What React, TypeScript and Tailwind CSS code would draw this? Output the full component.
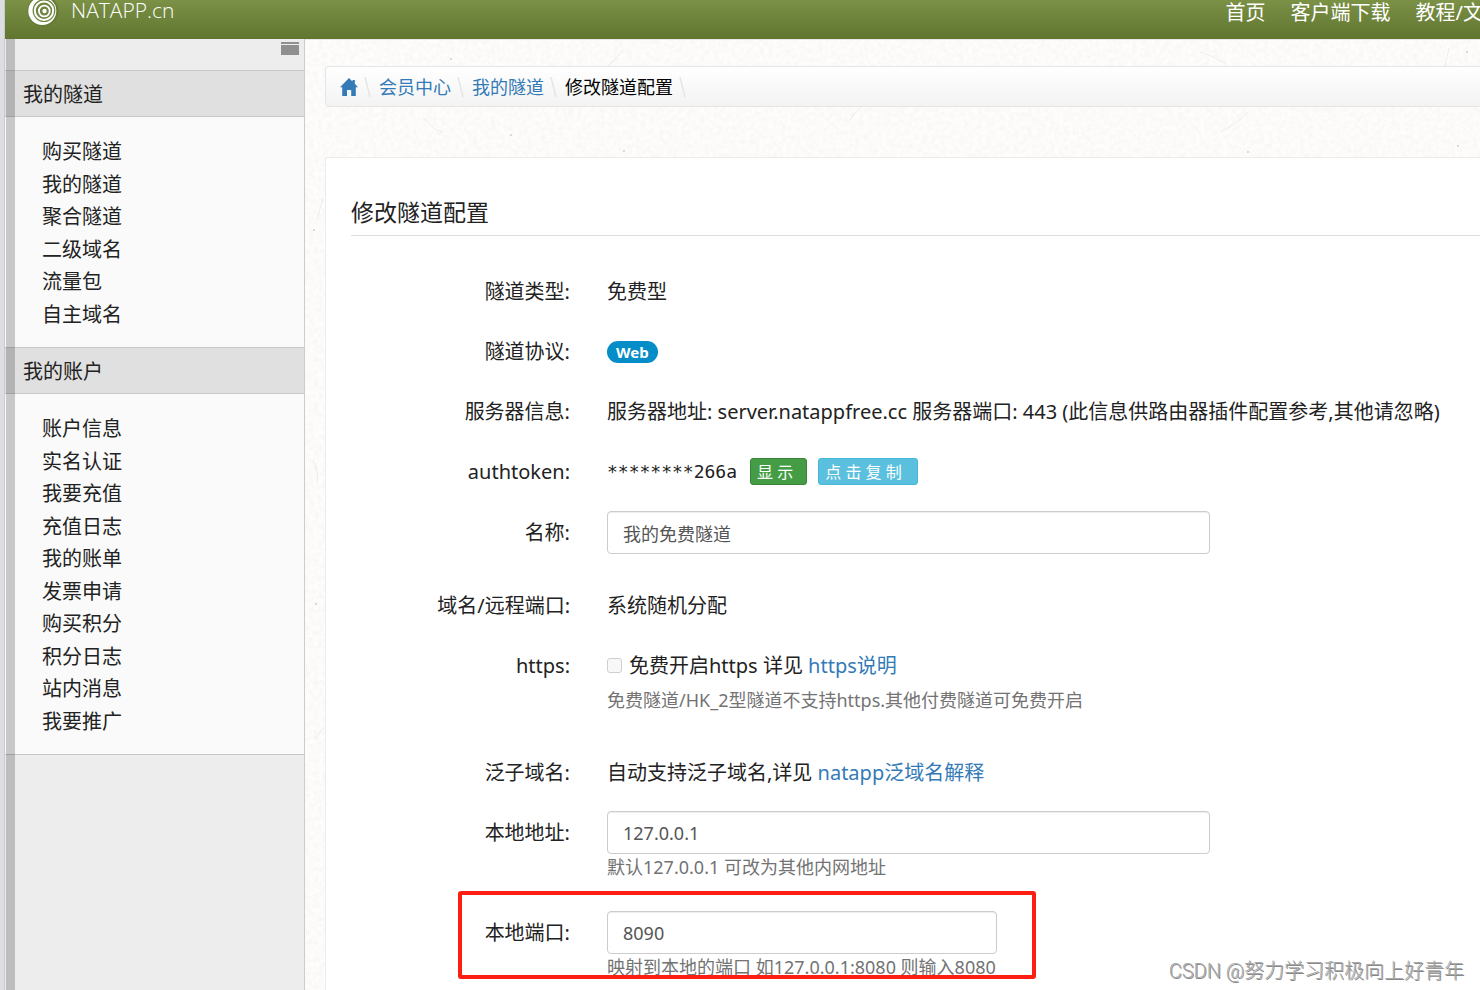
import { useState } from 'react';
import type { ReactNode } from 'react';

const navItems = ['首页', '客户端下载', '教程/文档'];

const menuGroups = [
  {
    title: '我的隧道',
    items: ['购买隧道', '我的隧道', '聚合隧道', '二级域名', '流量包', '自主域名'],
  },
  {
    title: '我的账户',
    items: [
      '账户信息',
      '实名认证',
      '我要充值',
      '充值日志',
      '我的账单',
      '发票申请',
      '购买积分',
      '积分日志',
      '站内消息',
      '我要推广',
    ],
  },
];

const inputClass =
  'h-[43px] w-full rounded border border-[#ccc] bg-white px-[15px] text-lg text-[#555] shadow-[inset_0_1px_1px_rgba(0,0,0,0.075)] outline-none focus:border-[#66afe9]';

function Logo() {
  return (
    <svg className="-mt-1 h-8 w-8 shrink-0" viewBox="0 0 32 32" fill="none">
      <circle cx="16" cy="15" r="15.5" fill="#667a35" />
      <circle cx="15.3" cy="15" r="14" fill="#fff" />
      <circle cx="17" cy="14.6" r="11.4" fill="#6f8540" />
      <circle cx="17" cy="14.8" r="9.2" stroke="#fff" strokeWidth="2" />
      <circle cx="17.3" cy="15" r="5.4" stroke="#fff" strokeWidth="1.8" />
      <circle cx="17.5" cy="15" r="2.2" fill="#fff" />
    </svg>
  );
}

function HomeIcon() {
  return (
    <svg className="h-[18px] w-[18px]" viewBox="0 0 18 18" fill="#337ab7">
      <path d="M9 0 12.5 3.5V2h2.3v3.8L18 9.2h-2.2V18h-4.6v-6H7v6H2.2V9.2H0L9 0Z" />
    </svg>
  );
}

function Slash() {
  return (
    <svg className="h-5 w-[7px] shrink-0" viewBox="0 0 7 20" stroke="#e6e6e6" strokeWidth="1.6">
      <path d="M1 0 6 20" />
    </svg>
  );
}

// Faint paper grain behind the content area
function PaperTexture() {
  return (
    <svg className="pointer-events-none absolute inset-0 h-full w-full" aria-hidden="true">
      <filter id="grain">
        <feTurbulence type="fractalNoise" baseFrequency="0.22" numOctaves="3" seed="4" />
        <feColorMatrix values="0 0 0 0 0.55  0 0 0 0 0.54  0 0 0 0 0.5  0.3 0 0 0 -0.1" />
      </filter>
      <rect width="100%" height="100%" filter="url(#grain)" opacity="0.7" />
      <g fill="none" stroke="#8a857a" strokeOpacity="0.12">
        <path d="M300 28q12-8 18-18M595 68q14-10 20-22M895 12q14 4 26 12M1144 8l-4 18M545 80q8-14 22-18M915 92q14-6 28-20M120 78q6 12 18 14M12 180l6-22M8 420q6 12 4 24M10 700l8-12" />
      </g>
      <g fill="#777" fillOpacity="0.35">
        <circle cx="146" cy="19" r="1" />
        <circle cx="319" cy="111" r="1" />
        <circle cx="206" cy="95" r="1" />
        <circle cx="943" cy="112" r="1" />
        <circle cx="1162" cy="12" r="1" />
        <circle cx="1153" cy="106" r="1" />
        <circle cx="9" cy="190" r="1" />
        <circle cx="11" cy="564" r="1" />
      </g>
    </svg>
  );
}

function TopBar() {
  return (
    <header className="flex h-[39px] items-start bg-linear-to-b from-[#7b9146] to-[#61752f] pl-[22px] text-white">
      <a href="#" className="flex items-start gap-3">
        <Logo />
        <span className="font-['Open_Sans','Noto_Sans',sans-serif] text-[21px] leading-5 font-light">NATAPP.cn</span>
      </a>
      <nav className="mt-px -mr-[23px] ml-auto flex shrink-0 gap-[25px]">
        {navItems.map((item) => (
          <a key={item} href="#" className="text-xl leading-6 whitespace-nowrap">
            {item}
          </a>
        ))}
      </nav>
    </header>
  );
}

function Sidebar() {
  return (
    <aside className="relative w-[300px] shrink-0 border-r border-[#ccc] bg-[#ededed]">
      <div className="flex h-[31px] justify-end pt-[3px] pr-[5px]">
        <button type="button" aria-label="收起菜单" className="flex h-[13px] w-[18px] flex-col gap-px">
          <span className="h-0.5 w-full bg-[#8f8f8f]" />
          <span className="h-2.5 w-full bg-[#8f8f8f]" />
        </button>
      </div>
      {menuGroups.map((group) => (
        <section key={group.title}>
          <h2 className="h-[47px] border-y border-[#c8c8c8] bg-[#e0e0e0] pl-[18px] text-xl leading-[47px]">
            {group.title}
          </h2>
          <ul className="bg-[#fafafa] pt-[19px] pb-4 pl-[37px] text-xl leading-relaxed">
            {group.items.map((item) => (
              <li key={item}>
                <a href="#">{item}</a>
              </li>
            ))}
          </ul>
        </section>
      ))}
      <div className="h-px bg-[#c8c8c8]" />
      <div className="absolute inset-y-0 left-px w-[9px] bg-black/20" />
    </aside>
  );
}

function Breadcrumb() {
  return (
    <nav className="flex h-[41px] shrink-0 items-center gap-1.5 rounded-l border border-r-0 border-[#e5e5e5] bg-linear-to-b from-white to-[#f3f3f3] pl-3.5 text-lg">
      <a href="#" aria-label="首页">
        <HomeIcon />
      </a>
      <Slash />
      <a href="#" className="ml-0.5 text-[#337ab7]">会员中心</a>
      <Slash />
      <a href="#" className="ml-0.5 text-[#337ab7]">我的隧道</a>
      <Slash />
      <span className="ml-0.5 text-black">修改隧道配置</span>
      <Slash />
    </nav>
  );
}

interface RowProps {
  label: string;
  htmlFor?: string;
  hint?: string;
  className?: string;
  children: ReactNode;
}

function Row({ label, htmlFor, hint, className = 'mb-[17px]', children }: RowProps) {
  const labelClass = 'w-[219px] shrink-0 text-right leading-[43px]';

  return (
    <div className={`flex gap-[37px] ${className}`}>
      {htmlFor ? (
        <label htmlFor={htmlFor} className={labelClass}>{label}</label>
      ) : (
        <span className={labelClass}>{label}</span>
      )}
      <div className="min-w-0 flex-1">
        <div className="flex h-[43px] items-center whitespace-nowrap">{children}</div>
        {hint && <p className="text-lg leading-[26px] whitespace-nowrap text-[#737373]">{hint}</p>}
      </div>
    </div>
  );
}

function TunnelForm() {
  const [name, setName] = useState('我的免费隧道');
  const [address, setAddress] = useState('127.0.0.1');
  const [port, setPort] = useState('8090');

  return (
    <form className="mt-[34px] text-xl">
      <Row label="隧道类型:">免费型</Row>
      <Row label="隧道协议:">
        <span className="h-[22px] rounded-full bg-[#058dc7] px-[9px] text-[15px] leading-[22px] font-bold text-white">
          Web
        </span>
      </Row>
      <Row label="服务器信息:">
        服务器地址: server.natappfree.cc 服务器端口: 443 (此信息供路由器插件配置参考,其他请忽略)
      </Row>
      <Row label="authtoken:" className="mb-[18px]">
        <span className="font-['DejaVu_Sans_Mono',monospace] text-lg">********266a</span>
        <button
          type="button"
          className="ml-[13px] h-[27px] rounded-[3px] border border-[#398439] bg-[#449d44] pr-[13px] pl-1.5 text-base leading-[22px] text-white"
        >
          显 示
        </button>
        <button
          type="button"
          className="ml-[11px] h-[27px] rounded-[3px] border border-[#46b8da] bg-[#5bc0de] pr-[15px] pl-1.5 text-base leading-[22px] text-white"
        >
          点 击 复 制
        </button>
      </Row>
      <Row label="名称:" htmlFor="name" className="mb-[30px]">
        <div className="w-full max-w-[603px]">
          <input id="name" className={inputClass} value={name} onChange={(e) => setName(e.target.value)} />
        </div>
      </Row>
      <Row label="域名/远程端口:">系统随机分配</Row>
      <Row
        label="https:"
        className="mb-[38px]"
        hint="免费隧道/HK_2型隧道不支持https.其他付费隧道可免费开启"
      >
        <input
          id="https"
          type="checkbox"
          disabled
          className="mr-[7px] h-[15px] w-[15px] appearance-none rounded-[3px] border border-[#cfcfcf] bg-[#f8f8f8]"
        />
        <label htmlFor="https">免费开启https 详见&nbsp;</label>
        <a href="#" className="text-[#337ab7]">https说明</a>
      </Row>
      <Row label="泛子域名:">
        自动支持泛子域名,详见&nbsp;
        <a href="#" className="text-[#337ab7]">natapp泛域名解释</a>
      </Row>
      <Row label="本地地址:" htmlFor="address" className="mb-[31px]" hint="默认127.0.0.1 可改为其他内网地址">
        <div className="w-full max-w-[603px]">
          <input id="address" className={inputClass} value={address} onChange={(e) => setAddress(e.target.value)} />
        </div>
      </Row>
      <div className="relative">
        <Row label="本地端口:" htmlFor="port" hint="映射到本地的端口 如127.0.0.1:8080 则输入8080">
          <div className="w-full max-w-[390px]">
            <input id="port" className={inputClass} value={port} onChange={(e) => setPort(e.target.value)} />
          </div>
        </Row>
        {/* Highlight around the port field */}
        <div className="pointer-events-none absolute -top-5 left-[107px] h-[88px] w-[578px] rounded-[3px] border-4 border-[#fe1e12]" />
      </div>
    </form>
  );
}

export default function App() {
  return (
    <div className="relative flex h-screen overflow-hidden bg-[#fefdfc] font-['Noto_Sans','Noto_Sans_CJK_SC',sans-serif] text-[#222]">
      <div className="w-[5px] shrink-0 border-r border-[#c9cbd0] bg-[#dcdee4]" />
      <div className="flex min-w-0 flex-1 flex-col">
        <TopBar />
        <div className="flex min-h-0 flex-1">
          <Sidebar />
          <main className="relative min-w-0 flex-1 overflow-hidden border-t border-[#e8e8e4]">
            <PaperTexture />
            <div className="relative flex h-full flex-col pt-[26px] pl-5">
              <Breadcrumb />
              <div className="mt-[50px] flex-1 border-t border-l border-[#ececec] bg-white pt-8 pl-[25px]">
                <h1 className="border-b border-[#ddd] text-[23px] leading-[45px]">修改隧道配置</h1>
                <TunnelForm />
              </div>
            </div>
          </main>
        </div>
      </div>
      <div className="pointer-events-none absolute right-4 bottom-1 font-['Roboto','Noto_Sans_CJK_SC',sans-serif] text-xl leading-[30px] font-light text-[#aaa] [text-shadow:1px_1px_0_#888,-1px_-1px_0_#fff]">
        CSDN @努力学习积极向上好青年
      </div>
    </div>
  );
}
